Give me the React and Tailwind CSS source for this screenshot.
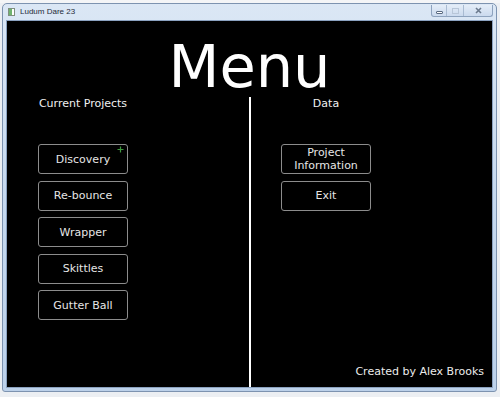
const game = { fontFamily: '"DejaVu Sans", Verdana, sans-serif' };

function GameButton({ children, cursor = false }) {
  return (
    <div className="relative w-[90px] h-[30px] rounded-[3px] border-[1.5px] border-[#8c8c8c] flex items-center justify-center text-center">
      <span className="text-[11px] leading-[13px] text-[#e6e6e6]">{children}</span>
      {cursor && (
        <svg className="absolute top-[1px] right-[3px]" width="7" height="7" viewBox="0 0 7 7">
          <path d="M3.5 0.5v6M0.5 3.5h6" stroke="#3f9a3f" strokeWidth="1.2" />
        </svg>
      )}
    </div>
  );
}

function TitleButtons() {
  return (
    <div className="absolute top-[1px] right-[3px] flex h-[12px] rounded-b-[3px] border border-t-0 border-[#8ea3be] bg-gradient-to-b from-[#e4edf8] to-[#cbdaee] overflow-hidden">
      <div className="w-[15px] flex items-center justify-center border-r border-[#a9bbd2]">
        <div className="w-[7px] h-[3px] mt-[3px] rounded-[1px] border border-[#5a6b82] bg-white" />
      </div>
      <div className="w-[17px] flex items-center justify-center border-r border-[#a9bbd2]">
        <div className="w-[7px] h-[6px] border border-[#b8c6d8]" />
      </div>
      <div className="w-[28px] flex items-center justify-center">
        <svg width="7" height="7" viewBox="0 0 7 7">
          <path d="M1 1l5 5M6 1l-5 5" stroke="#6b7a8e" strokeWidth="1.6" />
        </svg>
      </div>
    </div>
  );
}

export default function App() {
  return (
    <div className="relative w-[500px] h-[397px] overflow-hidden bg-[#eceff3]">
      <div className="h-[3px] bg-[#f4f5f7]" />
      <div className="ml-[2px] w-[495px] h-[389px] rounded-t-[5px] rounded-b-[3px] border border-[#7d93b0] bg-gradient-to-b from-[#dbe7f5] via-[#c6d9ef] to-[#bcd1ea] flex flex-col">
        <div className="relative h-[16px] flex items-center pl-[5px] gap-[5px]">
          <div className="w-[7px] h-[8px] border border-[#7f8f7f] bg-white flex">
            <div className="w-[3px] h-full bg-[#6fb36f]" />
          </div>
          <span className="text-[8px] text-[#1e2a3a]" style={{ fontFamily: '"Liberation Sans", Arial, sans-serif' }}>
            Ludum Dare 23
          </span>
          <TitleButtons />
        </div>
        <div
          className="mx-[3px] mb-[3px] flex-1 bg-black border border-[#8ba2c0] flex flex-col text-white"
          style={game}
        >
          <div className="h-[76px] pt-[19px] text-center text-[59px] leading-[54px] text-white">Menu</div>
          <div className="flex-1 flex">
            <div className="w-[242px] pl-[31px] flex flex-col">
              <div className="w-[90px] text-center text-[11px] leading-[13px] text-[#f0f0f0] whitespace-nowrap">
                Current Projects
              </div>
              <div className="mt-[34px] flex flex-col gap-[6.5px]">
                <GameButton cursor>Discovery</GameButton>
                <GameButton>Re-bounce</GameButton>
                <GameButton>Wrapper</GameButton>
                <GameButton>Skittles</GameButton>
                <GameButton>Gutter Ball</GameButton>
              </div>
            </div>
            <div className="w-[2px] bg-white" />
            <div className="flex-1 pl-[30px] flex flex-col">
              <div className="w-[90px] text-center text-[11px] leading-[13px] text-[#f0f0f0]">Data</div>
              <div className="mt-[34px] flex flex-col gap-[6.5px]">
                <GameButton>
                  Project
                  <br />
                  Information
                </GameButton>
                <GameButton>Exit</GameButton>
              </div>
              <div className="mt-auto pb-[9px] pr-[8px] text-right text-[11px] leading-[13px] text-[#ececec]">
                Created by Alex Brooks
              </div>
            </div>
          </div>
        </div>
      </div>
    </div>
  );
}
